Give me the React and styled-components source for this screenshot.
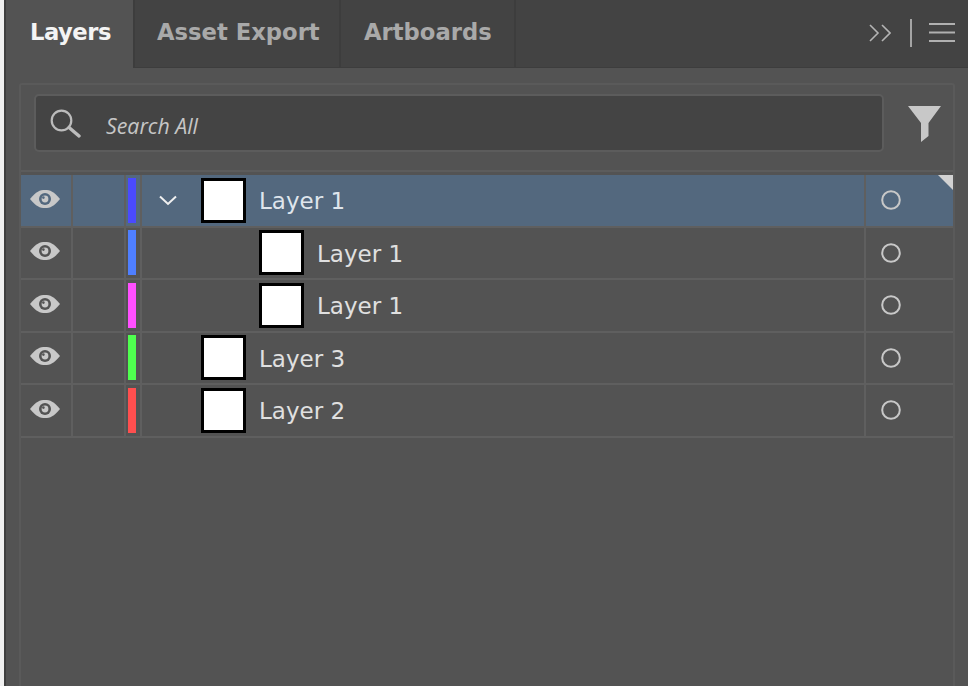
import React from "react";
import styled, { createGlobalStyle } from "styled-components";

const Global = createGlobalStyle`
  html, body {
    margin: 0;
    padding: 0;
    background: #f0f0f0;
  }
  body {
    font-family: "DejaVu Sans", "Liberation Sans", sans-serif;
  }
`;

const Page = styled.div`
  width: 968px;
  height: 686px;
  padding-left: 4px;
  box-sizing: border-box;
  overflow: hidden;
`;

const Panel = styled.div`
  height: 100%;
  display: flex;
  flex-direction: column;
  background: #535353;
  border-left: 2px solid #3f3f3f;
`;

const TabBar = styled.div`
  height: 68px;
  flex: none;
  display: flex;
  align-items: stretch;
  background: #434343;
  border-bottom: 1px solid #3d3d3d;
  box-sizing: border-box;
`;

const Tab = styled.div`
  display: flex;
  align-items: center;
  box-sizing: border-box;
  width: ${(p) => p.$width}px;
  padding-left: ${(p) => p.$pad}px;
  padding-bottom: 4px;
  font-size: 22.7px;
  font-weight: 700;
  letter-spacing: ${(p) => (p.$active ? "-0.5px" : "0")};
  white-space: nowrap;
  color: ${(p) => (p.$active ? "#f4f4f4" : "#a9a9a9")};
  background: ${(p) => (p.$active ? "#535353" : "transparent")};
  margin-bottom: ${(p) => (p.$active ? "-1px" : "0")};
  border-right: 2px solid #3d3d3d;
`;

const TabTools = styled.div`
  margin-left: auto;
  display: flex;
  align-items: center;
  padding: 0 13px 2px 0;
`;

const Divider = styled.div`
  width: 2px;
  height: 28px;
  margin: 0 17px 0 19px;
  background: #a4a4a4;
`;

const Body = styled.div`
  flex: 1;
  min-height: 0;
  padding: 15px 13px 0 13px;
`;

const Frame = styled.div`
  height: 100%;
  box-sizing: border-box;
  border: 2px solid #5a5a5a;
  border-bottom: none;
  border-radius: 3px 3px 0 0;
  display: flex;
  flex-direction: column;
`;

const SearchRow = styled.div`
  height: 87px;
  flex: none;
  box-sizing: border-box;
  display: flex;
  align-items: center;
  padding: 0 12px 9px 13px;
  border-bottom: 2px solid #5c5c5c;
`;

const SearchBox = styled.div`
  flex: none;
  width: 850px;
  height: 58px;
  box-sizing: border-box;
  display: flex;
  align-items: center;
  background: #444444;
  border: 2px solid #5c5c5c;
  border-radius: 5px;
  padding-left: 14px;
`;

const SearchText = styled.span`
  margin-left: 25px;
  padding-top: 5px;
  font-family: "Open Sans", "Noto Sans", sans-serif;
  font-size: 21.3px;
  font-style: italic;
  color: #c6c6c6;
`;

const FilterSlot = styled.div`
  margin: 2px 0 0 24px;
  display: flex;
`;

const List = styled.div`
  padding-top: 3px;
  display: flex;
  flex-direction: column;
`;

const Row = styled.div`
  position: relative;
  height: 52.5px;
  box-sizing: border-box;
  display: flex;
  align-items: stretch;
  border-bottom: 2px solid #5f5f5f;
  background: ${(p) => (p.$selected ? "#53687e" : "#535353")};
`;

const Cell = styled.div`
  flex: none;
  width: ${(p) => p.$width}px;
  display: flex;
  align-items: center;
  box-sizing: border-box;
  border-right: 2px solid #5f5f5f;
`;

const EyeCell = styled(Cell)`
  padding: 0 0 3px 9px;
`;

const ColorCell = styled(Cell)`
  padding-left: 2px;
`;

const TargetCell = styled(Cell)`
  padding-left: 15px;
  border-right: none;
`;

const Swatch = styled.div`
  width: 8px;
  height: 45px;
  background: ${(p) => p.$color};
`;

const NameCell = styled.div`
  flex: 1;
  display: flex;
  align-items: center;
  box-sizing: border-box;
  padding-left: ${(p) => p.$indent}px;
  border-right: 2px solid #5f5f5f;
`;

const ChevronSlot = styled.div`
  flex: none;
  width: 59px;
  box-sizing: border-box;
  padding-right: 7px;
  display: flex;
  justify-content: center;
`;

const Thumb = styled.div`
  flex: none;
  width: 45px;
  height: 45px;
  box-sizing: border-box;
  background: #ffffff;
  border: 3px solid #000000;
`;

const LayerName = styled.span`
  margin-left: 13px;
  padding-top: 2px;
  font-size: 23px;
  white-space: nowrap;
  color: ${(p) => (p.$selected ? "#dfe5ec" : "#e0e0e0")};
`;

const Corner = styled.div`
  position: absolute;
  top: 0;
  right: 0;
  width: 0;
  height: 0;
  border-top: 15px solid #d2d2d2;
  border-left: 15px solid transparent;
`;

const Eye = ({ bg }) => (
  <svg width="30" height="18" viewBox="0 0 30 18">
    <path d="M0 9 C6 1.5 10 0 15 0 C20 0 24 1.5 30 9 C24 16.5 20 18 15 18 C10 18 6 16.5 0 9 Z" fill="#c8c8c8" />
    <circle cx="15" cy="9" r="6" fill={bg} />
    <circle cx="15" cy="9" r="3.4" fill="#c8c8c8" />
    <circle cx="13.4" cy="7.6" r="1.3" fill={bg} />
  </svg>
);

const Target = () => (
  <svg width="20" height="20" viewBox="0 0 20 20">
    <circle cx="10" cy="10" r="8.8" fill="none" stroke="#c8c8c8" strokeWidth="2" />
  </svg>
);

const Chevron = () => (
  <svg width="18" height="11" viewBox="0 0 18 11">
    <path d="M1 1.5 L9 9 L17 1.5" fill="none" stroke="#f0f0f0" strokeWidth="2" />
  </svg>
);

const Search = () => (
  <svg width="31" height="29" viewBox="0 0 31 29">
    <circle cx="11.5" cy="11.5" r="9.8" fill="none" stroke="#bcbcbc" strokeWidth="2.2" />
    <path d="M19 18.5 L29 27" stroke="#bcbcbc" strokeWidth="3.4" strokeLinecap="round" />
  </svg>
);

const Funnel = () => (
  <svg width="33" height="36" viewBox="0 0 33 36">
    <path d="M0 0 H33 L20.5 17 V30 L13 36 V17 Z" fill="#c8c8c8" />
  </svg>
);

const More = () => (
  <svg width="22" height="18" viewBox="0 0 22 18">
    <path d="M1 1 L9 9 L1 17 M13 1 L21 9 L13 17" fill="none" stroke="#b4b4b4" strokeWidth="1.6" />
  </svg>
);

const Menu = () => (
  <svg width="26" height="19" viewBox="0 0 26 19">
    <path d="M0 1 H26 M0 9.5 H26 M0 18 H26" stroke="#b0b0b0" strokeWidth="2" />
  </svg>
);

const layers = [
  { name: "Layer 1", color: "#4a4aff", indent: 0, open: true, selected: true },
  { name: "Layer 1", color: "#4f7fff", indent: 117 },
  { name: "Layer 1", color: "#ff4fff", indent: 117 },
  { name: "Layer 3", color: "#4fff4f", indent: 59 },
  { name: "Layer 2", color: "#ff4f4f", indent: 59 },
];

export default function App() {
  return (
    <Page>
      <Global />
      <Panel>
        <TabBar>
          <Tab $active $width={129} $pad={24}>Layers</Tab>
          <Tab $width={206} $pad={22}>Asset Export</Tab>
          <Tab $width={175} $pad={23}>Artboards</Tab>
          <TabTools>
            <More />
            <Divider />
            <Menu />
          </TabTools>
        </TabBar>
        <Body>
          <Frame>
            <SearchRow>
              <SearchBox>
                <Search />
                <SearchText>Search All</SearchText>
              </SearchBox>
              <FilterSlot>
                <Funnel />
              </FilterSlot>
            </SearchRow>
            <List>
              {layers.map((layer, i) => (
                <Row key={i} $selected={layer.selected}>
                  <EyeCell $width={52}>
                    <Eye bg={layer.selected ? "#53687e" : "#535353"} />
                  </EyeCell>
                  <Cell $width={53} />
                  <ColorCell $width={16}>
                    <Swatch $color={layer.color} />
                  </ColorCell>
                  <NameCell $indent={layer.indent}>
                    {layer.open && (
                      <ChevronSlot>
                        <Chevron />
                      </ChevronSlot>
                    )}
                    <Thumb />
                    <LayerName $selected={layer.selected}>{layer.name}</LayerName>
                  </NameCell>
                  <TargetCell $width={87}>
                    <Target />
                  </TargetCell>
                  {layer.selected && <Corner />}
                </Row>
              ))}
            </List>
          </Frame>
        </Body>
      </Panel>
    </Page>
  );
}
